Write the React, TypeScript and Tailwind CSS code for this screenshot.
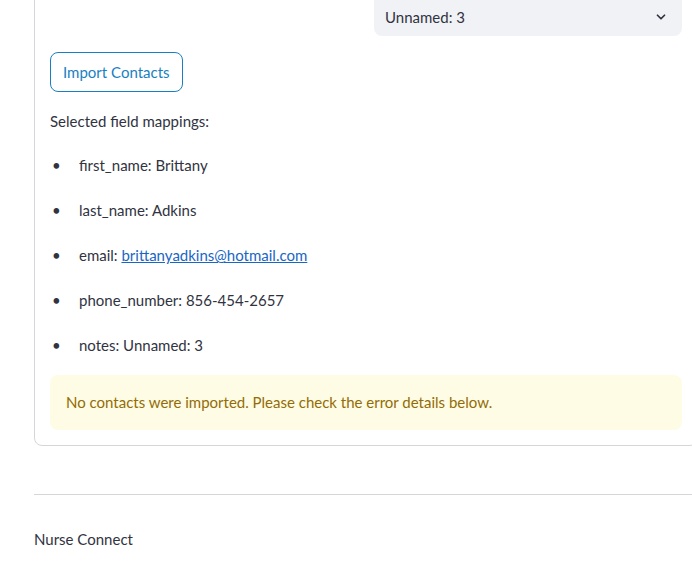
import React from "react";

const items: { k: string; v: string; link?: boolean }[] = [
  { k: "first_name", v: "Brittany" },
  { k: "last_name", v: "Adkins" },
  { k: "email", v: "brittanyadkins@hotmail.com", link: true },
  { k: "phone_number", v: "856-454-2657" },
  { k: "notes", v: "Unnamed: 3" },
];

export default function App() {
  return (
    <div
      className="w-[692px] h-[564px] overflow-hidden bg-white text-[#31333f]"
      style={{ fontFamily: "Lato, 'Noto Sans', sans-serif" }}
    >
      <div className="ml-[34px] w-[664px] -mt-[20px] border border-[#d6d6d9] rounded-lg px-[15px] pt-[10px] pb-[15px]">
        <div className="flex justify-end">
          <div className="w-[308px] h-[45px] bg-[#f0f2f6] rounded-lg flex items-end pb-[9px] pl-[11px] pr-[14px] justify-between">
            <span className="text-[15px] leading-[20px]">Unnamed: 3</span>
            <svg width="14" height="14" viewBox="0 0 24 24" className="mb-[3px]">
              <path d="M6 9l6 6 6-6" fill="none" stroke="#31333f" strokeWidth="3" strokeLinecap="round" strokeLinejoin="round" />
            </svg>
          </div>
        </div>
        <button className="mt-[16px] h-[40px] px-[12px] rounded-lg border border-[#1a7fc2] text-[#1a7fc2] text-[15px] bg-white">
          Import Contacts
        </button>
        <p className="mt-[17px] text-[15px] leading-[24px]">Selected field mappings:</p>
        <ul className="mt-[10px] flex flex-col">
          {items.map((it) => (
            <li key={it.k} className="h-[45px] flex items-center text-[15px]">
              <span className="w-[29px] pl-[2px] text-[15px]">•</span>
              <span>
                {it.k}:{" "}
                {it.link ? (
                  <a className="text-[#1a66c5] underline">{it.v}</a>
                ) : (
                  it.v
                )}
              </span>
            </li>
          ))}
        </ul>
        <div className="mt-[7px] h-[55px] bg-[#fffce6] rounded-lg flex items-center px-[16px] text-[15px] text-[#926c05]">
          No contacts were imported. Please check the error details below.
        </div>
      </div>
      <div className="ml-[34px] mt-[48px] border-t border-[#d6d6d9]" />
      <div className="ml-[34px] mt-[33px] text-[15px]">Nurse Connect</div>
    </div>
  );
}
